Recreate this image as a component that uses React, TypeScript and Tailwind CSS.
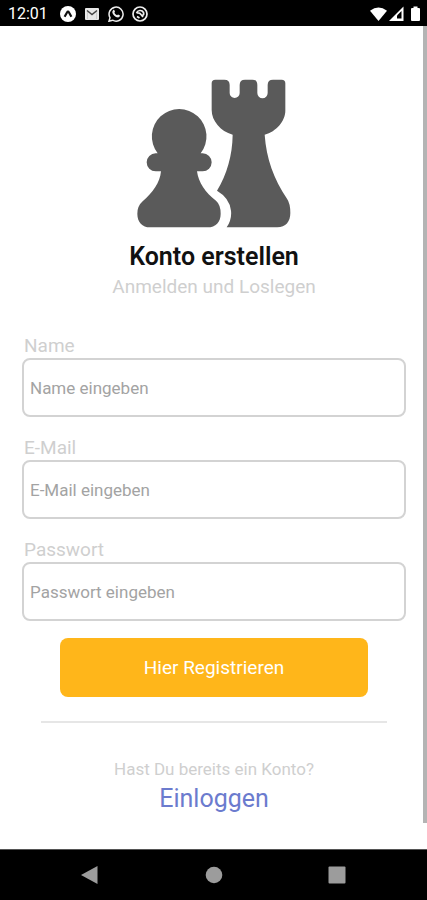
import { useState } from "react";

const fields = [
  { id: "name", label: "Name", type: "text", placeholder: "Name eingeben" },
  { id: "email", label: "E-Mail", type: "email", placeholder: "E-Mail eingeben" },
  { id: "password", label: "Passwort", type: "password", placeholder: "Passwort eingeben" },
];

function StatusBar() {
  return (
    <header className="flex h-[26px] shrink-0 items-center justify-between bg-black pl-2 pr-1.5 pt-0.5 text-white">
      <div className="flex items-center gap-2">
        <span className="mr-1 text-base leading-6">12:01</span>
        <svg className="size-4" viewBox="0 0 16 16">
          <circle cx="8" cy="8" r="8" fill="#fff" />
          <path d="M4.600 10.800 7 6.500Q8 4.800 9 6.500l2.400 4.300" fill="none" stroke="#111" strokeWidth="2.200" />
        </svg>
        <svg className="size-4" viewBox="0 0 16 16">
          <rect x="1" y="2" width="14" height="12" rx="1" fill="#e8e8e8" />
          <path d="M3 4.500 8 8.500l5-4" fill="none" stroke="#444" strokeWidth="1.500" />
          <path d="M3.500 13V6M12.500 13V6" fill="none" stroke="#ccc" />
        </svg>
        <svg className="size-4" viewBox="0 0 16 16">
          <path d="M1 15.2 2 11.6A7 7 0 1 1 4.6 14.2Z" fill="none" stroke="#eee" strokeWidth="1.5" />
          <path d="M5.1 4.2c.6-.6 1.2-.3 1.4.3l.5 1.2-.6 1c.6 1.2 1.4 2 2.7 2.6l.9-.8 1.7.8c.5.3.1 1.6-.9 2-2.5.9-6.900-3.200-6.500-5.600Z" fill="#eee" />
        </svg>
        <svg className="size-4" viewBox="0 0 16 16" fill="none" stroke="#eee">
          <circle cx="8" cy="8" r="7" strokeWidth="1.700" />
          <path d="M4.500 7C5.500 4 10 3.500 11.500 6.500C12 8 11.500 9 10.500 9.500M4.500 7C6.500 6.500 8 7 9 8.500L11 11M5 10.500 7.500 12" strokeWidth="1.700" />
        </svg>
      </div>
      <div className="flex items-center gap-0.5">
        <svg className="h-4 w-[17px]" viewBox="0 0 17 16">
          <path d="M0 4.800Q8.500-1.600 17 4.800L8.500 15Z" fill="#fff" />
        </svg>
        <svg className="h-4 w-[15px]" viewBox="0 0 15 16">
          <path d="M0 15 14.500.500V15Z" fill="#fff" />
          <path d="M8 12.500V9.500L12.500 5v7.500Z" fill="#000" />
        </svg>
        <svg className="ml-1 h-4 w-[11px]" viewBox="0 0 11 16">
          <path d="M3.500.500h4V2H9q1 0 1 1v11q0 1-1 1H2q-1 0-1-1V3q0-1 1-1h1.500Z" fill="#fff" />
        </svg>
      </div>
    </header>
  );
}

function ChessLogo() {
  return (
    <svg className="h-[149px] w-[154px]" viewBox="37 26 462 447" fill="#5a5a5a" aria-hidden="true">
      <path d="M99 249A82 82 0 1 1 228 249H234A27 27 0 0 1 234 303H217C221 336 242 367 274 391Q288 403 288 430C288 455 273 471 249 471H76C53 471 38 455 38 430Q38 407 54 393C84 367 106 337 109 303H93A27 27 0 0 1 93 249Z" />
      <path d="M272 28H299Q315 28 315 44V68A15 15 0 0 0 345 68V44Q345 28 361 28H383Q398 28 398 44V68A15 15 0 0 0 429 68V44Q429 28 445 28H471Q482 28 482 39V121C482 151 455 184 420 193C425 264 447 326 487 385Q497 399 497 428C497 454 483 471 458 471H306Q322 447 319 421Q315 383 277 361C307 311 323 255 324 193C287 183 261 151 261 119V39Q261 28 272 28Z" />
    </svg>
  );
}

function NavBar() {
  return (
    <nav className="flex h-[51px] shrink-0 items-center justify-between border-t border-[#555] bg-black px-20">
      <button type="button" aria-label="Zurück">
        <svg className="size-5" viewBox="0 0 20 20" fill="#9c9c9c">
          <path d="M1 10 17.500 1v18Z" />
        </svg>
      </button>
      <button type="button" aria-label="Startseite">
        <svg className="size-5" viewBox="0 0 20 20" fill="#9c9c9c">
          <circle cx="10" cy="10" r="8.300" />
        </svg>
      </button>
      <button type="button" aria-label="Übersicht">
        <svg className="size-5" viewBox="0 0 20 20" fill="#9c9c9c">
          <rect x="1.500" y="1.500" width="17" height="17" rx="1" />
        </svg>
      </button>
    </nav>
  );
}

export default function App() {
  const [values, setValues] = useState<Record<string, string>>({});

  const handleSubmit = (e: React.FormEvent) => {
    e.preventDefault();
  };

  return (
    <div className="flex min-h-screen flex-col bg-white font-[Roboto,sans-serif]">
      <StatusBar />

      <div className="mb-[26px] flex-1 border-r-4 border-[#b4b4b4]">
        <main className="flex flex-col pl-[22px] pr-[17px] pt-[53px]">
          <div className="flex flex-col items-center">
            <ChessLogo />
            <h1 className="mt-[13px] text-[25px] font-semibold leading-8 text-[#111]">
              Konto erstellen
            </h1>
            <p className="text-[19px] leading-7 text-[#cfcfcf]">Anmelden und Loslegen</p>
          </div>

          <form onSubmit={handleSubmit} className="mt-[33px] flex flex-col gap-[17px]">
            <div className="flex flex-col gap-[19px]">
              {fields.map((field) => (
                <div key={field.id} className="flex flex-col">
                  <label htmlFor={field.id} className="pl-0.5 text-[19px] leading-6 text-[#cfcfcf]">
                    {field.label}
                  </label>
                  <input
                    id={field.id}
                    type={field.type}
                    placeholder={field.placeholder}
                    value={values[field.id] ?? ""}
                    onChange={(e) => setValues({ ...values, [field.id]: e.target.value })}
                    className="h-[59px] w-full rounded-lg border-2 border-[#d3d3d3] px-1.5 text-[17px] text-gray-800 placeholder-[#a3a3a3] outline-none focus:border-[#ffb61a]"
                  />
                </div>
              ))}
            </div>
            <button
              type="submit"
              className="mx-[38px] h-[59px] rounded-lg bg-[#ffb61a] pt-0.5 text-[19px] text-white"
            >
              Hier Registrieren
            </button>
          </form>

          <hr className="mx-[19px] mt-6 border-t-2 border-[#e6e6e6]" />

          <div className="mt-[34px] flex flex-col items-center">
            <p className="text-[17px] leading-6 text-[#cfcfcf]">Hast Du bereits ein Konto?</p>
            <a href="#login" className="text-[25px] leading-9 text-[#6b7bce]">
              Einloggen
            </a>
          </div>
        </main>
      </div>

      <NavBar />
    </div>
  );
}
